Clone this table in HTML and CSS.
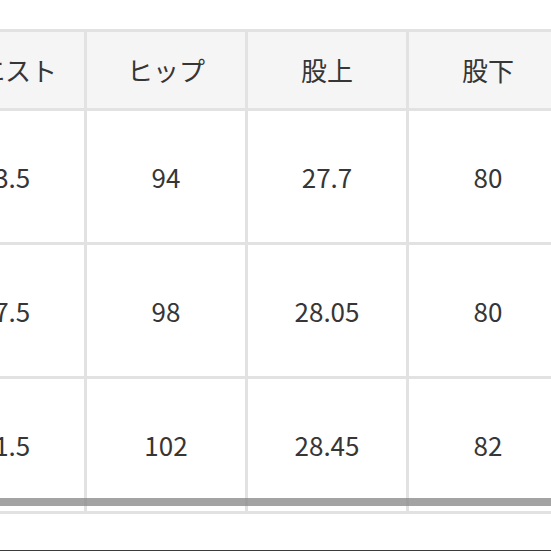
FILE: index.html
```html
<!DOCTYPE html>
<html lang="ja">
<head>
<meta charset="utf-8">
<link rel="stylesheet" href="styles.css">
</head>
<body>
<div class="page">
  <div class="scroller">
    <div class="grid">
      <div class="cell head">ウエスト</div>
      <div class="cell head">ヒップ</div>
      <div class="cell head">股上</div>
      <div class="cell head">股下</div>
      <div class="cell">63.5</div>
      <div class="cell">94</div>
      <div class="cell">27.7</div>
      <div class="cell">80</div>
      <div class="cell">67.5</div>
      <div class="cell">98</div>
      <div class="cell">28.05</div>
      <div class="cell">80</div>
      <div class="cell">71.5</div>
      <div class="cell">102</div>
      <div class="cell">28.45</div>
      <div class="cell">82</div>
    </div>
    <div class="scrollbar"></div>
  </div>
  <div class="rule"></div>
</div>
</body>
</html>
```
FILE: styles.css
```css
html, body {
  margin: 0;
  padding: 0;
  background: #ffffff;
}
.page {
  width: 551px;
  height: 551px;
  overflow: hidden;
  font-family: "Noto Sans CJK JP", "Noto Sans", sans-serif;
  color: #363636;
}
.scroller {
  position: relative;
  margin-top: 29px;
  width: 551px;
  overflow: hidden;
}
.grid {
  display: grid;
  grid-template-columns: repeat(4, 158px);
  grid-template-rows: 76px 131px 131px 132px;
  gap: 3px;
  padding: 3px;
  background: #e2e2e2;
  margin-left: -77px;
  width: max-content;
}
.cell {
  background: #ffffff;
  display: flex;
  align-items: center;
  justify-content: center;
  font-size: 26px;
  font-weight: 400;
  line-height: 1;
  white-space: nowrap;
}
.cell.head {
  background: #f5f5f5;
}
.scrollbar {
  position: absolute;
  left: 0;
  right: 0;
  top: 469px;
  height: 8px;
  background: rgba(140, 140, 140, 0.8);
}
.rule {
  margin-top: 36px;
  height: 1px;
  background: #3a3a3a;
}
```
